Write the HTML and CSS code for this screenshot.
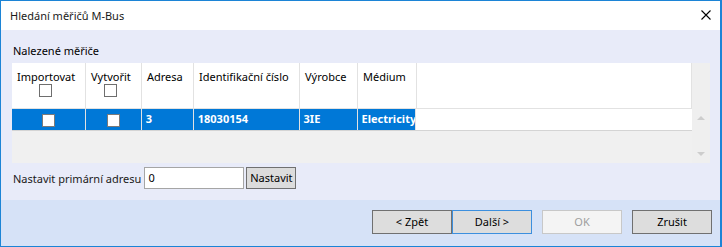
FILE: index.html
```html
<!DOCTYPE html>
<html lang="cs">
<head>
<meta charset="utf-8">
<title>Hledání měřičů M-Bus</title>
<link rel="stylesheet" href="styles.css">
</head>
<body>
<div class="window">
  <div class="titlebar">
    <span class="title">Hledání měřičů M-Bus</span>
    <svg class="close" width="10" height="10" viewBox="0 0 10 10"><path d="M0.5 0.5 L9.5 9.5 M9.5 0.5 L0.5 9.5" stroke="#000" stroke-width="1.1" fill="none"/></svg>
  </div>
  <div class="content">
    <div class="label">Nalezené měřiče</div>
    <div class="grid">
      <div class="table">
        <div class="hrow">
          <div class="hcell c1"><span>Importovat</span><span class="hcb"></span></div>
          <div class="hcell c2"><span>Vytvořit</span><span class="hcb"></span></div>
          <div class="hcell c3">Adresa</div>
          <div class="hcell c4">Identifikační číslo</div>
          <div class="hcell c5">Výrobce</div>
          <div class="hcell c6">Médium</div>
          <div class="hcell fill"></div>
        </div>
        <div class="drow">
          <div class="dcell c1 center"><span class="cb"></span></div>
          <div class="dcell c2 center"><span class="cb"></span></div>
          <div class="dcell c3">3</div>
          <div class="dcell c4">18030154</div>
          <div class="dcell c5">3IE</div>
          <div class="dcell c6">Electricity</div>
          <div class="dcell dfill"></div>
        </div>
      </div>
      <div class="scrollbar">
        <span class="arrow up"></span>
        <span class="arrow down"></span>
      </div>
    </div>
    <div class="addr">
      <span class="addr-label">Nastavit primární adresu</span>
      <span class="input">0</span>
      <span class="setbtn">Nastavit</span>
    </div>
  </div>
  <div class="footer">
    <span class="btn">&lt; Zpět</span>
    <span class="btn focus">Další &gt;</span>
    <span class="btn disabled gap">OK</span>
    <span class="btn gap">Zrušit</span>
  </div>
</div>
</body>
</html>
```
FILE: styles.css
```css
* { box-sizing: border-box; }
html, body { margin: 0; padding: 0; }
body {
  font-family: "Noto Sans", "Liberation Sans", sans-serif;
  font-size: 11px;
  color: #000;
  background: #fff;
}
.window {
  width: 722px;
  height: 247px;
  border: 1px solid #1c84d6;
  border-right-width: 2px;
  display: flex;
  flex-direction: column;
}
.titlebar {
  height: 29px;
  background: #fff;
  display: flex;
  align-items: center;
  padding-left: 9px;
  padding-right: 9px;
  justify-content: space-between;
  flex: none;
}
.title { line-height: 16px; color: #1a1a1a; }
.close { display: block; margin-top: -1px; }
.content {
  background: #e8ebf9;
  height: 170px;
  flex: none;
  padding: 13px 0 0 11px;
}
.label { line-height: 16px; height: 16px; margin-bottom: 4px; padding-left: 1px; }
.grid {
  display: flex;
  width: 698px;
  height: 100px;
}
.table {
  width: 680px;
  background: #f0f0f0;
}
.hrow {
  display: flex;
  height: 46px;
  background: #fff;
  border-bottom: 1px solid #e2e2e2;
}
.hcell {
  border-right: 1px solid #e2e2e2;
  padding: 6px 0 0 5px;
  line-height: 16px;
  display: flex;
  flex-direction: column;
  align-items: flex-start;
}
.c1 { width: 74px; }
.c2 { width: 56px; }
.c3 { width: 52px; }
.c4 { width: 106px; }
.c5 { width: 58px; }
.c6 { width: 59px; }
.fill { width: 275px; }
.hcb {
  width: 13px;
  height: 13px;
  border: 1px solid #6e6e6e;
  background: #fff;
  margin-top: -1px;
}
.c1 .hcb { margin-left: 22px; }
.c2 .hcb { margin-left: 13px; }
.drow {
  display: flex;
  height: 22px;
  border-bottom: 1px solid #d4d4d4;
}
.dcell {
  background: #0078d7;
  color: #fff;
  font-weight: bold;
  border-right: 1px solid #e2e2e2;
  line-height: 20px;
  padding-left: 4px;
  white-space: nowrap;
  overflow: hidden;
}
.dcell.center { display: flex; justify-content: center; align-items: center; padding-left: 0; }
.dfill { background: #fff; width: 276px; border-right: none; }
.cb {
  width: 13px;
  height: 13px;
  border: 1px solid #7a7a7a;
  background: #fff;
  margin-top: 1px;
}
.scrollbar {
  width: 18px;
  background: #efefef;
  position: relative;
}
.arrow {
  position: absolute;
  left: 5px;
  width: 0;
  height: 0;
  border-left: 4px solid transparent;
  border-right: 4px solid transparent;
}
.arrow.up { top: 53px; border-bottom: 4px solid #cdcdcd; }
.arrow.down { top: 89px; border-top: 4px solid #cdcdcd; }
.addr {
  display: flex;
  align-items: center;
  margin-top: 4px;
  height: 22px;
  padding-left: 1px;
}
.addr-label { margin-right: 3px; color: #1a1a1a; }
.input {
  width: 100px;
  height: 22px;
  border: 1px solid #a5a5a5;
  background: #fff;
  line-height: 20px;
  padding-left: 3px;
}
.setbtn {
  margin-left: 2px;
  width: 50px;
  height: 22px;
  border: 1px solid #707070;
  background: #dcdcdc;
  line-height: 20px;
  text-align: center;
}
.footer {
  flex: 1;
  background: #d6e2f7;
  display: flex;
  justify-content: flex-end;
  align-items: flex-start;
  padding: 10px 8px 0 0;
}
.btn {
  width: 80px;
  height: 24px;
  border: 1px solid #707070;
  background: #dddddd;
  text-align: center;
  line-height: 22px;
}
.btn.focus { border-color: #3c8fde; }
.btn.gap { margin-left: 10px; }
.btn.disabled { background: #f4f4f4; border-color: #c8c8c8; color: #9e9e9e; }
```
